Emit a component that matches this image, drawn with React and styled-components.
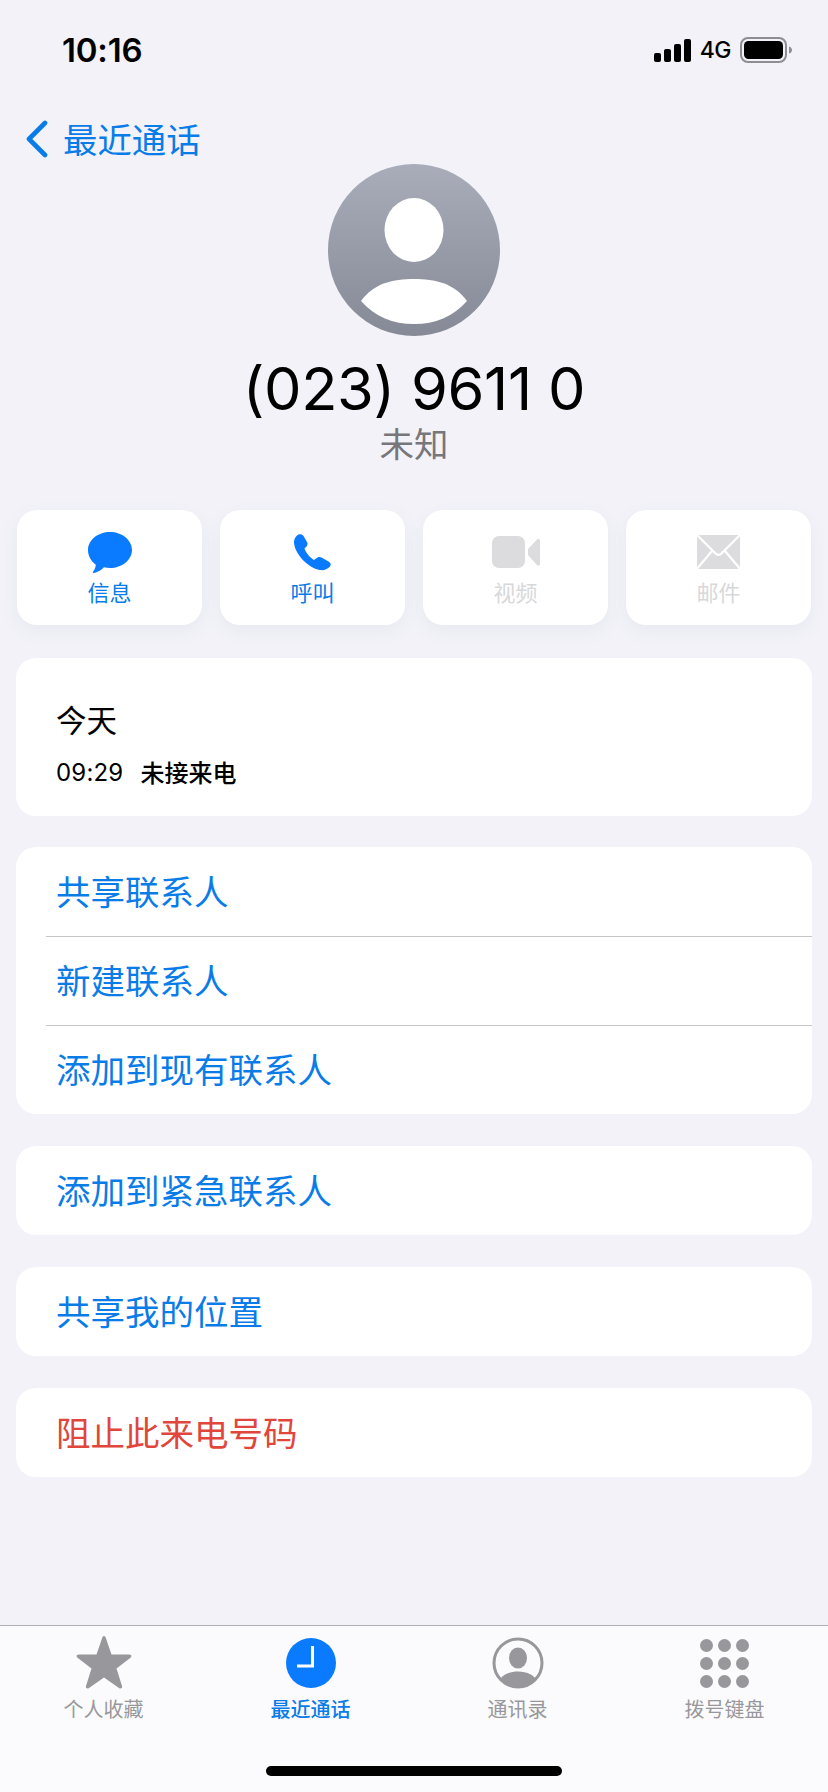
import React from 'react';
import styled, { createGlobalStyle } from 'styled-components';

const Global = createGlobalStyle`
  html, body { margin: 0; padding: 0; background: #f2f2f8; }
  * { box-sizing: border-box; }
  body { font-family: Inter, "Noto Sans CJK SC", sans-serif; }
`;
const CJK = `"Noto Sans CJK SC", Inter, sans-serif`;
const BLUE = '#0a7ce8';

const Page = styled.div`
  width: 828px; height: 1792px; display: flex; flex-direction: column;
  background: #f2f2f8; overflow: hidden;
`;
const StatusBar = styled.div`
  height: 98px; padding: 31px 35px 0 62px; display: flex; justify-content: space-between; align-items: flex-start;
`;
const Time = styled.div`font-size: 33px; font-weight: 600; line-height: 38px; color: #000; letter-spacing: -0.2px;`;
const StatusIcons = styled.div`display: flex; align-items: center; gap: 9px; height: 38px;`;
const Network = styled.span`font-size: 23px; font-weight: 500; color: #000; line-height: 38px; letter-spacing: -0.5px;`;
const BackRow = styled.div`display: flex; align-items: center; gap: 15px; height: 66px; padding: 0 0 0 25px; margin-top: 8px; margin-bottom: 1px;`;
const BackLabel = styled.span`font-family: ${CJK}; font-size: 34.4px; color: ${BLUE}; line-height: 46px; margin-top: -2px;`;
const Header = styled.div`display: flex; flex-direction: column; align-items: center; margin-top: -9px;`;
const Phone = styled.div`font-size: 59.5px; line-height: 64px; margin-top: 20px; color: #000; font-weight: 400; letter-spacing: -0.4px; font-family: Inter, sans-serif;`;
const Sub = styled.div`font-family: ${CJK}; font-size: 34.5px; line-height: 44px; color: #76767b;`;
const Actions = styled.div`display: grid; grid-template-columns: repeat(4, 185px); gap: 18px; padding: 0 17px; margin-top: 46px;`;
const Action = styled.div`
  height: 115px; background: #fff; border-radius: 20px; box-shadow: 0 6px 18px rgba(120,120,150,0.07);
  display: flex; flex-direction: column; align-items: center; padding-top: 20px;
`;
const IconSlot = styled.div`height: 44px; display: flex; align-items: center; justify-content: center;`;
const ActionLabel = styled.div`
  font-family: ${CJK}; font-size: 22px; line-height: 30px; margin-top: 2px;
  color: ${p => (p.$off ? '#d8d8da' : BLUE)};
`;
const Card = styled.div`
  background: #fff; border-radius: 20px; margin: ${p => p.$top}px 16px 0; overflow: hidden;
`;
const CallInfo = styled.div`padding: 40px 41px 0 40px; height: 158px; display: flex; flex-direction: column;`;
const Day = styled.div`font-family: ${CJK}; font-size: 30.5px; line-height: 42px; color: #000;`;
const CallLine = styled.div`display: flex; gap: 17px; margin-top: 15px; font-size: 24px; line-height: 34px; color: #000; align-items: center;`;
const CallTime = styled.span`font-family: Inter, sans-serif; letter-spacing: 0.2px; margin-top: 1px;`;
const CallType = styled.span`font-family: ${CJK}; font-weight: 500; margin-top: -1px;`;
const Row = styled.div`
  height: ${p => p.$h || 89}px; display: flex; align-items: center; position: relative; padding: 0 0 4px 40px;
  font-family: ${CJK}; font-size: 34.5px; color: ${p => (p.$red ? '#e0463c' : BLUE)};
  & + &::before {
    content: ''; position: absolute; left: 30px; right: 0; top: 0; height: 1px; background: #c6c6c8;
  }
`;
const Spacer = styled.div`flex: 1;`;
const TabBar = styled.div`
  height: 167px; background: #fbfbfd; border-top: 1px solid #b0b0b4; position: relative;
  display: grid; grid-template-columns: repeat(4, 207px); padding-top: 9px;
`;
const Tab = styled.div`display: flex; flex-direction: column; align-items: center;`;
const TabIcon = styled.div`height: 56px; display: flex; align-items: center; justify-content: center;`;
const TabLabel = styled.div`
  font-family: ${CJK}; font-size: 20px; line-height: 28px; margin-top: 4px; font-weight: ${p => (p.$on ? 500 : 400)};
  color: ${p => (p.$on ? BLUE : '#98989c')};
`;
const Home = styled.div`
  position: absolute; left: 266px; top: 140px; width: 296px; height: 10px; border-radius: 5px; background: #000;
`;

const Signal = () => (
  <svg width="37" height="23" viewBox="0 0 37 23" fill="#000">
    <rect x="0" y="14" width="7" height="9" rx="2" />
    <rect x="10" y="10" width="7" height="13" rx="2" />
    <rect x="20" y="5" width="7" height="18" rx="2" />
    <rect x="30" y="0" width="7" height="23" rx="2" />
  </svg>
);
const Battery = () => (
  <svg width="53" height="26" viewBox="0 0 53 26">
    <rect x="1" y="1" width="45" height="24" rx="7" fill="none" stroke="#8e8e92" strokeWidth="2" />
    <rect x="4" y="4" width="39" height="18" rx="4.5" fill="#000" />
    <path d="M49 9.5c2 .5 3 2 3 3.5s-1 3-3 3.5z" fill="#8e8e92" />
  </svg>
);
const Chevron = () => (
  <svg width="23" height="38" viewBox="0 0 23 38" fill="none">
    <path d="M20 3 L4 19 L20 35" stroke={BLUE} strokeWidth="4.6" strokeLinecap="round" strokeLinejoin="round" />
  </svg>
);
const Avatar = () => (
  <svg width="172" height="172" viewBox="0 0 172 172">
    <defs>
      <linearGradient id="av" x1="0" y1="0" x2="0" y2="1">
        <stop offset="0" stopColor="#a8adb9" />
        <stop offset="1" stopColor="#858a96" />
      </linearGradient>
    </defs>
    <circle cx="86" cy="86" r="86" fill="url(#av)" />
    <ellipse cx="86" cy="66" rx="29.5" ry="32" fill="#fff" />
    <path d="M33 137 C46 119 65 115 86 115 C107 115 126 119 139 137 C125 153 107 160 86 160 C65 160 47 153 33 137 Z" fill="#fff" />
  </svg>
);
const Bubble = () => (
  <svg width="44" height="41" viewBox="0 0 44 41">
    <path d="M22 0C34 0 44 8 44 18S34 36 22 36c-2 0-4-.2-6-.7C13 38.500 9 40.500 6 41c-1 .2-1.500-.6-1-1.300 1.500-2 2.600-4.200 2.800-7C3 29 0 24 0 18 0 8 10 0 22 0Z" fill="#0a7aff" />
  </svg>
);
const Handset = () => (
  <svg width="37" height="37" viewBox="0 0 37 37">
    <path d="M3 1.500C5-.5 8 0 9.500 2L13 8C14 10 13.500 11.500 12 13L10.500 14.500C11.500 18 16 24 20 26L22 24.500C23.500 23 25.500 22.500 27.500 23.500L34.500 27.500C37 29 37.500 31 35.500 33C33 35.500 30 36.500 26 36C14 34 1 20 0 9C-.2 6 1 3.500 3 1.500Z" fill="#0a7aff" />
  </svg>
);
const Video = () => (
  <svg width="48" height="32" viewBox="0 0 48 32" fill="#dcdcde">
    <rect x="0" y="0" width="33" height="32" rx="7" />
    <path d="M36 13 L45 3.500c1-1 3-.7 3 1V28c0 1.500-2 2-3 1L36 19Z" />
  </svg>
);
const Mail = () => (
  <svg width="43" height="34" viewBox="0 0 43 34">
    <rect x="0" y="0" width="43" height="34" fill="#dcdcde" />
    <path d="M-1 -1 L18.500 18.500 C20.200 20.200 22.800 20.200 24.500 18.500 L44 -1 M-1 35 L15 16 M44 35 L28 16" fill="none" stroke="#fff" strokeWidth="2.2" />
  </svg>
);
const Star = () => (
  <svg width="56" height="54" viewBox="0 0 56 54">
    <path d="M28 0c1 0 1.600 1 2 2.500l5.500 16H53c2.500 0 3.300 1.800 1.500 3.300L40.500 32.500 46 50c.6 2.200-1.200 3.300-3 2L28 41.500 13 52c-1.800 1.300-3.600.2-3-2l5.500-17.500L1.500 21.800C-.3 20.300 .5 18.500 3 18.500h17.500l5.500-16C26.400 1 27 0 28 0Z" fill="#98989c" />
  </svg>
);
const Clock = () => (
  <svg width="50" height="50" viewBox="0 0 50 50">
    <circle cx="25" cy="25" r="25" fill="#0a7aff" />
    <path d="M26.500 8V28H11" fill="none" stroke="#fff" strokeWidth="3" />
  </svg>
);
const Person = () => (
  <svg width="52" height="52" viewBox="0 0 52 52">
    <defs>
      <clipPath id="pc"><circle cx="26" cy="26" r="24" /></clipPath>
    </defs>
    <circle cx="26" cy="26" r="24" fill="none" stroke="#98989c" strokeWidth="3" />
    <ellipse cx="26" cy="21" rx="9" ry="10.500" fill="#98989c" />
    <path d="M6 46C9 38 17 34.500 26 34.500S43 38 46 46C41 50 33 52 26 52S11 50 6 46Z" fill="#98989c" clipPath="url(#pc)" />
  </svg>
);
const Keypad = () => (
  <svg width="49" height="49" viewBox="0 0 49 49" fill="#98989c">
    {[6.500, 24.500, 42.500].flatMap(y =>
      [6.500, 24.500, 42.500].map(x => <circle key={`${x}-${y}`} cx={x} cy={y} r="6.500" />)
    )}
  </svg>
);

export default function App() {
  return (
    <Page>
      <Global />
      <StatusBar>
        <Time>10:16</Time>
        <StatusIcons>
          <Signal />
          <Network>4G</Network>
          <Battery />
        </StatusIcons>
      </StatusBar>
      <BackRow>
        <Chevron />
        <BackLabel>最近通话</BackLabel>
      </BackRow>
      <Header>
        <Avatar />
        <Phone>(023) 9611 0</Phone>
        <Sub>未知</Sub>
      </Header>
      <Actions>
        <Action><IconSlot><Bubble /></IconSlot><ActionLabel>信息</ActionLabel></Action>
        <Action><IconSlot><Handset /></IconSlot><ActionLabel>呼叫</ActionLabel></Action>
        <Action><IconSlot><Video /></IconSlot><ActionLabel $off>视频</ActionLabel></Action>
        <Action><IconSlot><Mail /></IconSlot><ActionLabel $off>邮件</ActionLabel></Action>
      </Actions>
      <Card $top={33}>
        <CallInfo>
          <Day>今天</Day>
          <CallLine><CallTime>09:29</CallTime><CallType>未接来电</CallType></CallLine>
        </CallInfo>
      </Card>
      <Card $top={31}>
        <Row>共享联系人</Row>
        <Row>新建联系人</Row>
        <Row>添加到现有联系人</Row>
      </Card>
      <Card $top={32}><Row>添加到紧急联系人</Row></Card>
      <Card $top={32}><Row>共享我的位置</Row></Card>
      <Card $top={32}><Row $red>阻止此来电号码</Row></Card>
      <Spacer />
      <TabBar>
        <Tab><TabIcon><Star /></TabIcon><TabLabel>个人收藏</TabLabel></Tab>
        <Tab><TabIcon><Clock /></TabIcon><TabLabel $on>最近通话</TabLabel></Tab>
        <Tab><TabIcon><Person /></TabIcon><TabLabel>通讯录</TabLabel></Tab>
        <Tab><TabIcon><Keypad /></TabIcon><TabLabel>拨号键盘</TabLabel></Tab>
        <Home />
      </TabBar>
    </Page>
  );
}
